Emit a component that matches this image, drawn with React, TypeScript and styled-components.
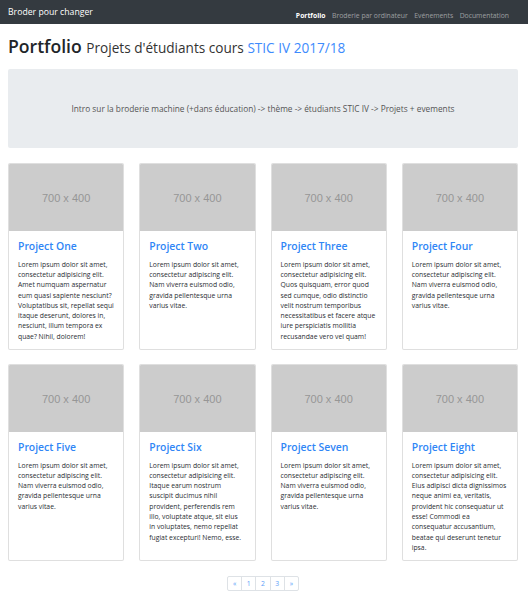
import React from "react";
import styled, { createGlobalStyle } from "styled-components";

const Global = createGlobalStyle`
  html, body { margin: 0; padding: 0; background: #fff; }
  body {
    font-family: "Open Sans", "Noto Sans", "Liberation Sans", sans-serif;
    color: #212529;
    -webkit-font-smoothing: antialiased;
  }
  * { box-sizing: border-box; }
`;

const Navbar = styled.nav`
  height: 24px;
  background: #343a40;
  display: flex;
  align-items: center;
  justify-content: space-between;
  padding: 0 19px 0 8px;
`;

const Brand = styled.a`
  color: #fff;
  font-size: 8.7px;
  text-decoration: none;
`;

const NavLinks = styled.ul`
  display: flex;
  list-style: none;
  margin: 0;
  padding: 0;
  gap: 6.5px;
`;

const NavLink = styled.a<{ $active?: boolean }>`
  font-size: 6.8px;
  text-decoration: none;
  color: ${(p) => (p.$active ? "#fff" : "rgba(255,255,255,0.5)")};
  font-weight: ${(p) => (p.$active ? 700 : 400)};
`;

const Container = styled.main`
  padding: 0 10px 0 8px;
`;

const Heading = styled.h1`
  margin: 12px 0 0;
  font-size: 17.6px;
  font-weight: 600;
  line-height: 1.2;
  color: #212529;
`;

const Sub = styled.small`
  font-size: 13.6px;
  font-weight: 400;
  color: #333;
`;

const SubLink = styled.a`
  color: #3d8bfd;
  text-decoration: none;
`;

const Jumbotron = styled.section`
  margin-top: 12px;
  height: 79px;
  background: #e9ecef;
  border-radius: 2px;
  display: flex;
  align-items: center;
  justify-content: center;
  font-size: 8.3px;
  color: #555;
`;

const Grid = styled.div`
  margin-top: 15px;
  display: grid;
  grid-template-columns: repeat(4, 1fr);
  column-gap: 15px;
  row-gap: 14px;
`;

const Card = styled.article`
  border: 1px solid rgba(0, 0, 0, 0.125);
  border-radius: 2px;
  overflow: hidden;
  background: #fff;
  display: flex;
  flex-direction: column;
`;

const Placeholder = styled.div`
  height: 67px;
  background: #cccccc;
  display: flex;
  align-items: center;
  justify-content: center;
  color: #969696;
  font-size: 11px;
  font-family: "Liberation Sans", "Open Sans", sans-serif;
`;

const CardBody = styled.div`
  padding: 9px 9px 7px 9px;
`;

const CardTitle = styled.h4`
  margin: 0 0 6px;
  font-size: 10.4px;
  font-weight: 600;
  line-height: 1.3;
  color: #2f86f6;
`;

const CardText = styled.p`
  margin: 0;
  font-size: 6.8px;
  line-height: 10.3px;
  color: #2a2e33;
`;

const Pager = styled.ul`
  list-style: none;
  display: flex;
  justify-content: center;
  margin: 15px 0 0;
  padding: 0 0 8px;
`;

const PageItem = styled.li`
  width: 15.2px;
  height: 15px;
  border: 1px solid #dee2e6;
  margin-left: -1px;
  display: flex;
  align-items: center;
  justify-content: center;
  font-size: 6.8px;
  color: #5a9ef8;
  &:first-child { border-radius: 2px 0 0 2px; margin-left: 0; }
  &:last-child { border-radius: 0 2px 2px 0; }
`;

const short =
  "Lorem ipsum dolor sit amet, consectetur adipiscing elit. Nam viverra euismod odio, gravida pellentesque urna varius vitae.";

const projects = [
  {
    title: "Project One",
    text: "Lorem ipsum dolor sit amet, consectetur adipisicing elit. Amet numquam aspernatur eum quasi sapiente nesciunt? Voluptatibus sit, repellat sequi itaque deserunt, dolores in, nesciunt, illum tempora ex quae? Nihil, dolorem!",
  },
  { title: "Project Two", text: short },
  {
    title: "Project Three",
    text: "Lorem ipsum dolor sit amet, consectetur adipisicing elit. Quos quisquam, error quod sed cumque, odio distinctio velit nostrum temporibus necessitatibus et facere atque iure perspiciatis mollitia recusandae vero vel quam!",
  },
  { title: "Project Four", text: short },
  { title: "Project Five", text: short },
  {
    title: "Project Six",
    text: "Lorem ipsum dolor sit amet, consectetur adipisicing elit. Itaque earum nostrum suscipit ducimus nihil provident, perferendis rem illo, voluptate atque, sit eius in\u00a0voluptates, nemo repellat fugiat excepturi! Nemo, esse.",
  },
  { title: "Project Seven", text: short },
  {
    title: "Project Eight",
    text: "Lorem ipsum dolor sit amet, consectetur adipisicing elit. Eius adipisci dicta dignissimos neque animi ea, veritatis, provident hic consequatur ut esse! Commodi ea consequatur accusantium, beatae qui deserunt tenetur ipsa.",
  },
];

export default function App() {
  return (
    <>
      <Global />
      <Navbar>
        <Brand href="#">Broder pour changer</Brand>
        <NavLinks>
          <li><NavLink $active href="#">Portfolio</NavLink></li>
          <li><NavLink href="#">Broderie par ordinateur</NavLink></li>
          <li><NavLink href="#">Evénements</NavLink></li>
          <li><NavLink href="#">Documentation</NavLink></li>
        </NavLinks>
      </Navbar>
      <Container>
        <Heading>
          Portfolio <Sub>Projets d'étudiants cours <SubLink href="#">STIC IV 2017/18</SubLink></Sub>
        </Heading>
        <Jumbotron>
          Intro sur la broderie machine (+dans éducation) -&gt; thème -&gt; étudiants STIC IV -&gt; Projets + evements
        </Jumbotron>
        <Grid>
          {projects.map((p) => (
            <Card key={p.title}>
              <Placeholder>700 x 400</Placeholder>
              <CardBody>
                <CardTitle>{p.title}</CardTitle>
                <CardText>{p.text}</CardText>
              </CardBody>
            </Card>
          ))}
        </Grid>
        <Pager>
          <PageItem>«</PageItem>
          <PageItem>1</PageItem>
          <PageItem>2</PageItem>
          <PageItem>3</PageItem>
          <PageItem>»</PageItem>
        </Pager>
      </Container>
    </>
  );
}
